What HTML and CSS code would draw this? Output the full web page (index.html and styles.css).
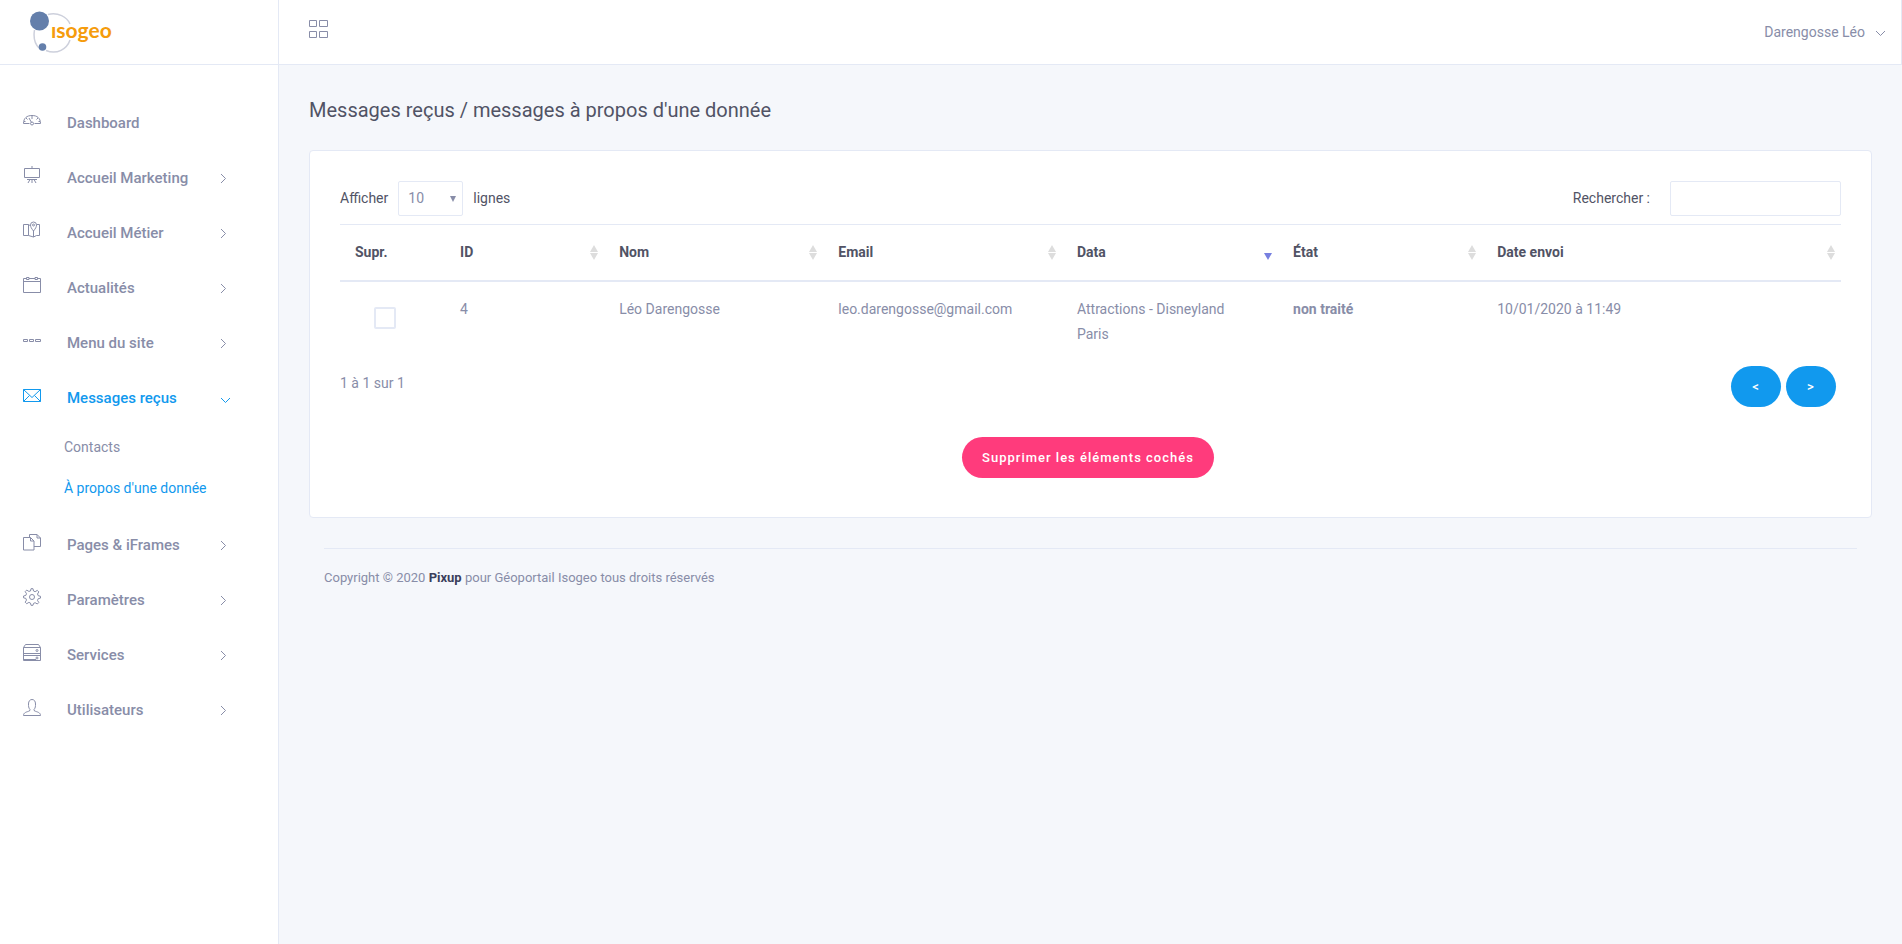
FILE: index.html
```html
<!DOCTYPE html>
<html lang="fr">
<head>
<meta charset="utf-8">
<meta name="viewport" content="width=device-width, initial-scale=1">
<title>Messages reçus</title>
<link rel="stylesheet" href="styles.css">
</head>
<body>
<svg class="sprite" aria-hidden="true">
  <symbol id="chevron-right" viewBox="0 0 7 11"><path d="M1 1l4.500 4.500L1 10"/></symbol>
  <symbol id="chevron-down" viewBox="0 0 11 7"><path d="M1 1l4.500 4.500L10 1"/></symbol>
</svg>
<div class="layout">
  <aside class="sidebar">
    <a class="brand" href="#" aria-label="isogeo">
      <svg width="90" height="44" viewBox="0 0 90 44">
        <path class="orbit" d="M18 4.500C28 2 37 7 40 14M4.500 20C3 29 6 35 9 38M16 40.500C27 45 37 39 40 30"/>
        <circle class="planet" cx="9.500" cy="11" r="9.500"/>
        <circle class="planet" cx="12.500" cy="37" r="3.800"/>
        <text class="wordmark" x="21" y="28">ısogeo</text>
      </svg>
    </a>
    <nav class="menu">
      <a class="menu-item" href="#">
        <svg class="icon" viewBox="0 0 18 18"><path d="M.5 12.500C.5 7 4 4.500 9 4.500s8.500 2.500 8.500 8h-6M.5 12.500h6M9 5v3M3 7l1.500 1.500M15 7l-1.500 1.500M6 7l2.500 4.500M1 10.500h1.500M15.500 10.500H17"/><circle cx="9" cy="12.500" r="1.500"/></svg>
        <span>Dashboard</span>
      </a>
      <a class="menu-item" href="#">
        <svg class="icon" viewBox="0 0 18 18"><path d="M1.500 2.500h15v9h-15zM9 0v2.500M4 13.500h10M7 13.500L5 17M11 13.500l2 3.500M9 13.500V17"/></svg>
        <span>Accueil Marketing</span>
        <svg class="arrow" viewBox="0 0 7 11"><use href="#chevron-right"/></svg>
      </a>
      <a class="menu-item" href="#">
        <svg class="icon" viewBox="0 0 18 18"><path d="M7 4.500L5.500 3.500H.5v11h5l5 1.500 3-1.500h3v-11H14M5.500 3.500v11M10.500 16V9.500M10.500 10C8.500 7.500 7.500 6 7.500 4a3 3 0 0 1 6 0c0 2-1 3.500-3 6z"/><circle cx="10.500" cy="4" r="1"/></svg>
        <span>Accueil Métier</span>
        <svg class="arrow" viewBox="0 0 7 11"><use href="#chevron-right"/></svg>
      </a>
      <a class="menu-item" href="#">
        <svg class="icon" viewBox="0 0 18 18"><path d="M3.500 2.500h-3v14h17v-14h-3M6 2.500h6M.5 5.500h17M3.500 1.500H6v2H3.500zM12 1.500h2.500v2H12z"/></svg>
        <span>Actualités</span>
        <svg class="arrow" viewBox="0 0 7 11"><use href="#chevron-right"/></svg>
      </a>
      <a class="menu-item" href="#">
        <svg class="icon" viewBox="0 0 18 18"><path d="M.5 8.500h4v2h-4zM6.500 8.500h4v2h-4zM12.500 8.500h5v2h-5z"/></svg>
        <span>Menu du site</span>
        <svg class="arrow" viewBox="0 0 7 11"><use href="#chevron-right"/></svg>
      </a>
      <a class="menu-item active" href="#" aria-expanded="true">
        <svg class="icon" viewBox="0 0 18 18"><path d="M.5 3.500h17v12H.5zM.5 3.500L9 11.500l8.500-8M.5 15.500l6-6M17.500 15.500l-6-6"/></svg>
        <span>Messages reçus</span>
        <svg class="arrow down" viewBox="0 0 11 7"><use href="#chevron-down"/></svg>
      </a>
      <div class="submenu">
        <a href="#">Contacts</a>
        <a class="active" href="#" aria-current="page">À propos d'une donnée</a>
      </div>
      <a class="menu-item" href="#">
        <svg class="icon" viewBox="0 0 18 18"><path d="M.5 4.500h7l3.500 3.500v9H.5zM7.500 4.500V8H11M6.500 4.500v-3h7.500l3.500 3.500v8.500H11M14 1.500V5h3.500"/></svg>
        <span>Pages &amp; iFrames</span>
        <svg class="arrow" viewBox="0 0 7 11"><use href="#chevron-right"/></svg>
      </a>
      <a class="menu-item" href="#">
        <svg class="icon" viewBox="0 0 18 18"><path d="M8 .7h2l.5 2.300 1.600.7 2.200-1.300 1.500 1.500-1.300 2.100.7 1.700 2.300.6v1.800l-2.300.6-.7 1.700 1.300 2.100-1.500 1.500-2.200-1.300-1.600.7L10 17.300H8l-.5-2.200-1.600-.7L3.700 15.700l-1.500-1.500 1.300-2.100-.7-1.700L.5 9.800V8l2.300-.6.7-1.700-1.300-2.100 1.500-1.500 2.200 1.300L7.500 3z"/><circle cx="9" cy="9" r="2.500"/></svg>
        <span>Paramètres</span>
        <svg class="arrow" viewBox="0 0 7 11"><use href="#chevron-right"/></svg>
      </a>
      <a class="menu-item" href="#">
        <svg class="icon" viewBox="0 0 18 18"><path d="M.5 4.500l2-3h13l2 3v13H.5zM.5 4.500h17M.5 10.500h17M.5 12.500h17M1 16.500h12"/><circle cx="14" cy="7.500" r="1"/><circle cx="14" cy="15" r="1"/></svg>
        <span>Services</span>
        <svg class="arrow" viewBox="0 0 7 11"><use href="#chevron-right"/></svg>
      </a>
      <a class="menu-item" href="#">
        <svg class="icon" viewBox="0 0 18 18"><path d="M.5 17.500c0-3 3-3.500 6-4.500l.5-1.500C5.500 10 5.500 8 5.500 6c0-3 1.500-4.500 3.500-4.500S12.500 3 12.500 6c0 2 0 4-1.500 5.500l.5 1.500c3 1 6 1.500 6 4.500z"/></svg>
        <span>Utilisateurs</span>
        <svg class="arrow" viewBox="0 0 7 11"><use href="#chevron-right"/></svg>
      </a>
    </nav>
  </aside>

  <div class="page">
    <header class="topbar">
      <button class="grid-button" type="button" aria-label="Réduire le menu">
        <svg width="19" height="18" viewBox="0 0 19 18"><path d="M.5.5h7v6h-7zM10.500.5h8v6h-8zM.5 11.500h7v6h-7zM10.500 11.500h8v6h-8z"/></svg>
      </button>
      <button class="user-button" type="button">
        <span>Darengosse Léo</span>
        <svg class="arrow down" viewBox="0 0 11 7"><use href="#chevron-down"/></svg>
      </button>
    </header>

    <main class="content">
      <h1 class="title">Messages reçus / messages à propos d'une donnée</h1>
      <section class="card">
        <div class="controls">
          <div class="length">
            <label for="length">Afficher</label>
            <span class="select-wrap">
              <select id="length"><option>10</option><option>25</option><option>50</option></select>
            </span>
            <span>lignes</span>
          </div>
          <div class="search">
            <label for="search">Rechercher :</label>
            <input id="search" type="search">
          </div>
        </div>
        <table class="messages">
          <colgroup>
            <col class="col-delete"><col class="col-id"><col class="col-name"><col class="col-email"><col class="col-data"><col class="col-state"><col>
          </colgroup>
          <thead>
            <tr>
              <th>Supr.</th>
              <th class="sort">ID</th>
              <th class="sort">Nom</th>
              <th class="sort">Email</th>
              <th class="sort desc" aria-sort="descending">Data</th>
              <th class="sort">État</th>
              <th class="sort">Date envoi</th>
            </tr>
          </thead>
          <tbody>
            <tr>
              <td><input class="check" type="checkbox" aria-label="Sélectionner le message 4"></td>
              <td>4</td>
              <td>Léo Darengosse</td>
              <td>leo.darengosse@gmail.com</td>
              <td>Attractions - Disneyland Paris</td>
              <td><strong>non traité</strong></td>
              <td>10/01/2020 à 11:49</td>
            </tr>
          </tbody>
        </table>
        <div class="table-footer">
          <span>1 à 1 sur 1</span>
          <div class="pager">
            <button class="pill" type="button">&lt;</button>
            <button class="pill" type="button">&gt;</button>
          </div>
        </div>
        <div class="actions">
          <button class="pill danger" type="button">Supprimer les éléments cochés</button>
        </div>
      </section>
      <footer class="footer">Copyright © 2020 <strong>Pixup</strong> pour Géoportail Isogeo tous droits réservés</footer>
    </main>
  </div>
</div>
</body>
</html>
```

FILE: styles.css
```css
:root {
  --line: #e4e9f5;
  --muted: #888da8;
  --dark: #515365;
  --blue: #1199ee;
  --pink: #ff3b7c;
}

* { box-sizing: border-box; }

body {
  margin: 0;
  background: #f5f7fb;
  color: var(--muted);
  font-family: Roboto, "Liberation Sans", sans-serif;
  font-size: 14px;
  line-height: 25px;
}

a { color: inherit; text-decoration: none; }

button, input, select { font: inherit; color: inherit; }

button { cursor: pointer; }

strong { font-weight: 700; }

.sprite { display: none; }

.layout {
  display: grid;
  grid-template-columns: 279px 1fr;
  min-height: 100vh;
}

.sidebar {
  background: #fff;
  border-right: 1px solid var(--line);
}

.brand {
  display: flex;
  align-items: center;
  height: 65px;
  padding-left: 30px;
  border-bottom: 1px solid var(--line);
}

.orbit { fill: none; stroke: #cdd0dc; stroke-width: 1.5; }
.planet { fill: #647fab; }
.wordmark { fill: #f59c0c; font-family: Lato, sans-serif; font-size: 21px; font-weight: 700; }

.menu {
  display: flex;
  flex-direction: column;
  padding: 30px 0;
}

.menu-item {
  display: flex;
  align-items: center;
  height: 55px;
  padding: 0 47px 0 23px;
  font-size: 15px;
  font-weight: 500;
}

.menu-item span { padding-top: 2px; }

.menu-item.active, .submenu .active { color: var(--blue); }

.icon {
  width: 18px;
  height: 18px;
  margin: 0 26px 5px 0;
  fill: none;
  stroke: currentColor;
}

.arrow {
  width: 7px;
  height: 11px;
  margin: 2px 4px 0 auto;
  fill: none;
  stroke: currentColor;
}

.arrow.down {
  width: 11px;
  height: 7px;
  margin-right: 0;
}

.menu-item .arrow.down { margin-top: 6px; }

.submenu {
  display: flex;
  flex-direction: column;
  padding: 2px 0 8px 64px;
}

.submenu a { line-height: 41px; }

.page { min-width: 0; }

.topbar {
  display: flex;
  align-items: center;
  justify-content: space-between;
  height: 65px;
  padding: 0 15px 0 30px;
  background: #fff;
  border-right: 1px solid var(--line);
  border-bottom: 1px solid var(--line);
}

.grid-button, .user-button {
  display: flex;
  align-items: center;
  gap: 10px;
  padding: 0;
  border: 0;
  background: none;
}

.grid-button { padding-bottom: 6px; }
.grid-button svg { fill: none; stroke: currentColor; }

.content { padding: 30px; }

.title {
  margin: 0 0 25px;
  color: var(--dark);
  font-size: 20px;
  font-weight: 400;
  line-height: 30px;
}

.card {
  padding: 30px 30px 39px;
  background: #fff;
  border: 1px solid var(--line);
  border-radius: 4px;
}

.controls {
  display: flex;
  justify-content: space-between;
  margin-bottom: 8px;
  color: var(--dark);
}

.length, .search {
  display: flex;
  align-items: center;
  gap: 10px;
}

.search { gap: 20px; }

.search input, .length select {
  height: 35px;
  background: #fff;
  border: 1px solid var(--line);
  border-radius: 2px;
}

.search input {
  width: 171px;
  padding: 0 10px;
}

.select-wrap {
  display: grid;
  align-items: center;
}

.select-wrap > *, .select-wrap::after { grid-area: 1 / 1; }

.select-wrap::after {
  content: "";
  justify-self: end;
  margin-right: 7px;
  border: 3px solid transparent;
  border-top: 6px solid var(--muted);
  border-bottom: 0;
  pointer-events: none;
}

.length select {
  width: 65px;
  padding: 0 9px;
  color: var(--muted);
  appearance: none;
}

.messages {
  width: 100%;
  table-layout: fixed;
  border-spacing: 0;
}

.col-delete { width: 7%; }
.col-id { width: 10.6%; }
.col-name { width: 14.6%; }
.col-email { width: 15.9%; }
.col-data { width: 14.4%; }
.col-state { width: 13.6%; }

.messages th, .messages td {
  padding: 15px 30px 15px 15px;
  text-align: left;
  vertical-align: top;
}

.messages th {
  position: relative;
  color: var(--dark);
  font-weight: 700;
  border-top: 1px solid var(--line);
  border-bottom: 2px solid var(--line);
}

.sort::before, .sort::after {
  content: "";
  position: absolute;
  right: 6px;
  border: 4px solid transparent;
}

.sort::before {
  top: 20px;
  border-top: 0;
  border-bottom: 7px solid #ddd;
}

.sort::after {
  top: 28px;
  border-bottom: 0;
  border-top: 7px solid #ddd;
}

.sort.desc::before { display: none; }
.sort.desc::after { border-top-color: #7780e0; }

.check {
  display: block;
  width: 22px;
  height: 22px;
  margin: 10px auto 0;
  background: #fff;
  border: 2px solid var(--line);
  border-radius: 2px;
  appearance: none;
}

.check:checked { background: var(--blue); }

.table-footer {
  display: flex;
  align-items: center;
  justify-content: space-between;
  padding: 4px 5px 0 0;
}

.table-footer > span { padding-bottom: 7px; }

.pager { display: flex; gap: 5px; }

.pill {
  min-width: 50px;
  height: 41px;
  padding: 0 20px;
  border: 0;
  border-radius: 21px;
  background: var(--blue);
  color: #fff;
  font-size: 13px;
  font-weight: 500;
  letter-spacing: 1px;
}

.pill.danger { background: var(--pink); }

.actions {
  display: flex;
  justify-content: center;
  padding-right: 5px;
  margin-top: 30px;
}

.footer {
  margin: 30px 15px 0;
  padding-top: 16px;
  border-top: 1px solid var(--line);
  font-size: 13px;
}

.footer strong { color: #3b3f5c; }
```
